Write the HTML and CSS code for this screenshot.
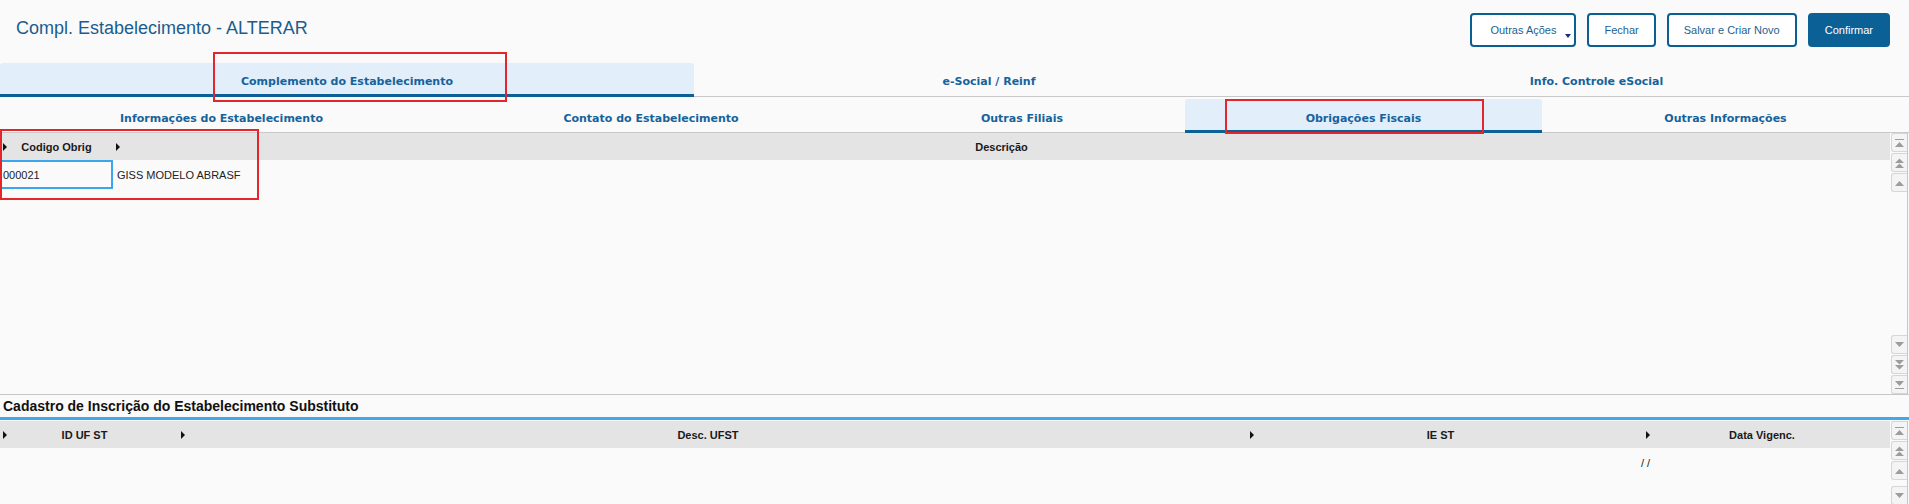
FILE: index.html
```html
<!DOCTYPE html>
<html lang="pt-BR">
<head>
  <meta charset="UTF-8" />
  <meta name="viewport" content="width=device-width, initial-scale=1.0" />
  <title>Compl. Estabelecimento - ALTERAR</title>
  <link rel="stylesheet" href="styles.css">
</head>
<body>
  <header class="topbar">
    <h1 class="title">Compl. Estabelecimento - ALTERAR</h1>
    <div class="actions">
      <button class="btn btn-menu">Outras Ações</button>
      <button class="btn">Fechar</button>
      <button class="btn">Salvar e Criar Novo</button>
      <button class="btn btn-primary">Confirmar</button>
    </div>
  </header>

  <nav class="tabs tabs-main">
    <div class="tab active">Complemento do Estabelecimento</div>
    <div class="tab">e-Social / Reinf</div>
    <div class="tab">Info. Controle eSocial</div>
  </nav>

  <nav class="tabs tabs-sub">
    <div class="tab">Informações do Estabelecimento</div>
    <div class="tab">Contato do Estabelecimento</div>
    <div class="tab">Outras Filiais</div>
    <div class="tab active">Obrigações Fiscais</div>
    <div class="tab">Outras Informações</div>
  </nav>

  <!-- Obrigacoes fiscais -->
  <section class="grid grid-obrig">
    <div class="grid-body">
      <div class="grid-head cols-obrig">
        <div class="hcell"><span class="label">Codigo Obrig</span></div>
        <div class="hcell"><span class="label">Descrição</span></div>
      </div>
      <div class="grid-row cols-obrig">
        <div class="cell cell-focus">000021</div>
        <div class="cell">GISS MODELO ABRASF</div>
      </div>
    </div>
    <div class="scroll">
      <div class="scroll-group">
        <span class="sbtn"><svg width="9" height="10" viewBox="0 0 9 10"><rect x="0" y="1" width="9" height="1" fill="#9c9c9c"/><path d="M0 9 L4.5 4 L9 9 Z" fill="#9c9c9c"/></svg></span>
        <span class="sbtn"><svg width="9" height="10" viewBox="0 0 9 10"><path d="M0 5 L4.5 0.5 L9 5 Z M0 10 L4.5 5.5 L9 10 Z" fill="#9c9c9c"/></svg></span>
        <span class="sbtn"><svg width="9" height="10" viewBox="0 0 9 10"><path d="M0 8 L4.5 3 L9 8 Z" fill="#9c9c9c"/></svg></span>
      </div>
      <div class="scroll-group">
        <span class="sbtn"><svg width="9" height="10" viewBox="0 0 9 10"><path d="M0 2 L4.5 7 L9 2 Z" fill="#9c9c9c"/></svg></span>
        <span class="sbtn"><svg width="9" height="10" viewBox="0 0 9 10"><path d="M0 0 L4.5 4.5 L9 0 Z M0 5 L4.5 9.5 L9 5 Z" fill="#9c9c9c"/></svg></span>
        <span class="sbtn"><svg width="9" height="10" viewBox="0 0 9 10"><path d="M0 1 L4.5 6 L9 1 Z" fill="#9c9c9c"/><rect x="0" y="8" width="9" height="1" fill="#9c9c9c"/></svg></span>
      </div>
    </div>
  </section>

  <h2 class="section-title">Cadastro de Inscrição do Estabelecimento Substituto</h2>

  <section class="grid grid-subst">
    <div class="grid-body">
      <div class="grid-head cols-subst">
        <div class="hcell"><span class="label">ID UF ST</span></div>
        <div class="hcell"><span class="label">Desc. UFST</span></div>
        <div class="hcell"><span class="label">IE ST</span></div>
        <div class="hcell"><span class="label">Data Vigenc.</span></div>
      </div>
      <div class="grid-row cols-subst">
        <div class="cell"></div>
        <div class="cell"></div>
        <div class="cell"></div>
        <div class="cell cell-date">/ /</div>
      </div>
    </div>
    <div class="scroll">
      <div class="scroll-group">
        <span class="sbtn"><svg width="9" height="10" viewBox="0 0 9 10"><rect x="0" y="1" width="9" height="1" fill="#9c9c9c"/><path d="M0 9 L4.5 4 L9 9 Z" fill="#9c9c9c"/></svg></span>
        <span class="sbtn"><svg width="9" height="10" viewBox="0 0 9 10"><path d="M0 5 L4.5 0.5 L9 5 Z M0 10 L4.5 5.5 L9 10 Z" fill="#9c9c9c"/></svg></span>
        <span class="sbtn"><svg width="9" height="10" viewBox="0 0 9 10"><path d="M0 8 L4.5 3 L9 8 Z" fill="#9c9c9c"/></svg></span>
      </div>
      <div class="scroll-group">
        <span class="sbtn"><svg width="9" height="10" viewBox="0 0 9 10"><path d="M0 2 L4.5 7 L9 2 Z" fill="#9c9c9c"/></svg></span>
        <span class="sbtn"><svg width="9" height="10" viewBox="0 0 9 10"><path d="M0 0 L4.5 4.5 L9 0 Z M0 5 L4.5 9.5 L9 5 Z" fill="#9c9c9c"/></svg></span>
        <span class="sbtn"><svg width="9" height="10" viewBox="0 0 9 10"><path d="M0 1 L4.5 6 L9 1 Z" fill="#9c9c9c"/><rect x="0" y="8" width="9" height="1" fill="#9c9c9c"/></svg></span>
      </div>
    </div>
  </section>

  <!-- highlight boxes -->
  <div class="mark mark-tab"></div>
  <div class="mark mark-subtab"></div>
  <div class="mark mark-grid"></div>
</body>
</html>
```

FILE: styles.css
```css
* {
  box-sizing: border-box;
}

body {
  margin: 0;
  height: 504px;
  overflow: hidden;
  position: relative;
  background-color: #fafafa;
  font-family: "Liberation Sans", Arial, sans-serif;
  color: #222;
}

/* top bar */
.topbar {
  display: flex;
  justify-content: space-between;
  align-items: flex-start;
  height: 63px;
  padding: 13px 19px 0 16px;
}

.title {
  margin: 0;
  font-size: 18px;
  font-weight: normal;
  line-height: 30px;
  color: #1b5d8f;
}

.actions {
  display: flex;
  gap: 11px;
}

.btn {
  height: 34px;
  padding: 0 15px;
  border: 2px solid #0b5e92;
  border-radius: 4px;
  background-color: #fff;
  color: #1d5f92;
  font-family: "Liberation Sans", Arial, sans-serif;
  font-size: 11px;
  position: relative;
}

.btn-menu {
  padding: 0 18px;
}

.btn-menu::after {
  content: '';
  position: absolute;
  right: 3px;
  bottom: 7px;
  border-left: 3px solid transparent;
  border-right: 3px solid transparent;
  border-top: 4px solid #1c2a80;
}

.btn-primary {
  background-color: #0b6196;
  border-color: #0b6196;
  color: #fff;
}

/* tabs */
.tabs {
  display: grid;
  border-bottom: 1px solid #c9c9c9;
}

.tabs-main {
  height: 34px;
  grid-template-columns: 694px 590px 1fr;
}

.tabs-sub {
  height: 36px;
  grid-template-columns: 443px 416px 326px 357px 1fr;
}

.tab {
  display: flex;
  align-items: center;
  justify-content: center;
  font-family: "DejaVu Sans", Tahoma, sans-serif;
  font-size: 11px;
  font-weight: bold;
  color: #16639c;
}

.tabs-main .tab {
  padding-top: 4px;
}

.tabs-sub .tab {
  padding-top: 8px;
}

.tab.active {
  background-color: #e2eefa;
  border-bottom: 3px solid #0b6196;
  border-radius: 3px 3px 0 0;
  margin-bottom: -1px;
}

.tabs-main .tab.active {
  padding-top: 6px;
}

.tabs-sub .tab.active {
  margin-top: 2px;
}

/* grids */
.grid {
  display: flex;
  margin-right: 1px;
  border-right: 1px solid #c6c6c6;
}

.grid-obrig {
  height: 261px;
}

.grid-subst {
  height: 124px;
  margin-top: 1px;
}

.grid-body {
  flex: 1;
}

.grid-head {
  display: grid;
  height: 27px;
  background-color: #e4e4e4;
}

.cols-obrig {
  grid-template-columns: 113px 1fr;
}

.cols-subst {
  grid-template-columns: 178px 1069px 396px 1fr;
}

.hcell {
  display: flex;
  align-items: center;
  padding-left: 3px;
  font-size: 11px;
  font-weight: bold;
  color: #1a1a1a;
}

.hcell::before {
  content: '';
  border-top: 4px solid transparent;
  border-bottom: 4px solid transparent;
  border-left: 4px solid #111;
}

.hcell .label {
  flex: 1;
  text-align: center;
  padding-right: 7px;
}

.cols-subst .label {
  padding-right: 16px;
}

.grid-row {
  display: grid;
  height: 29px;
  align-items: center;
  font-size: 11px;
}

.cell {
  padding-left: 4px;
}

.cell-focus {
  height: 100%;
  display: flex;
  align-items: center;
  padding-left: 1px;
  border: 2px solid #3ba6ec;
}

.cell-date {
  padding-left: 0;
  margin-left: -2px;
}

/* scroll buttons */
.scroll {
  width: 17px;
  padding-left: 1px;
  display: flex;
  flex-direction: column;
  justify-content: space-between;
}

.scroll-group {
  display: flex;
  flex-direction: column;
  gap: 1px;
}

.sbtn {
  height: 19px;
  display: flex;
  align-items: center;
  justify-content: center;
  background-color: #f4f4f4;
  border: 1px solid #d6d6d6;
  border-right: none;
  border-radius: 3px 0 0 3px;
}

.section-title {
  margin: 0;
  height: 26px;
  padding-left: 3px;
  border-top: 1px solid #c6c6c6;
  border-bottom: 3px solid #42a8ee;
  font-size: 14px;
  font-weight: bold;
  line-height: 22px;
  color: #111;
}

/* red highlight boxes drawn over the form */
.mark {
  position: absolute;
  border: 2px solid #e2262b;
  pointer-events: none;
}

.mark-tab {
  left: 213px;
  top: 52px;
  width: 294px;
  height: 50px;
}

.mark-subtab {
  left: 1225px;
  top: 99px;
  width: 259px;
  height: 35px;
}

.mark-grid {
  left: 0;
  top: 129px;
  width: 259px;
  height: 71px;
}
```
